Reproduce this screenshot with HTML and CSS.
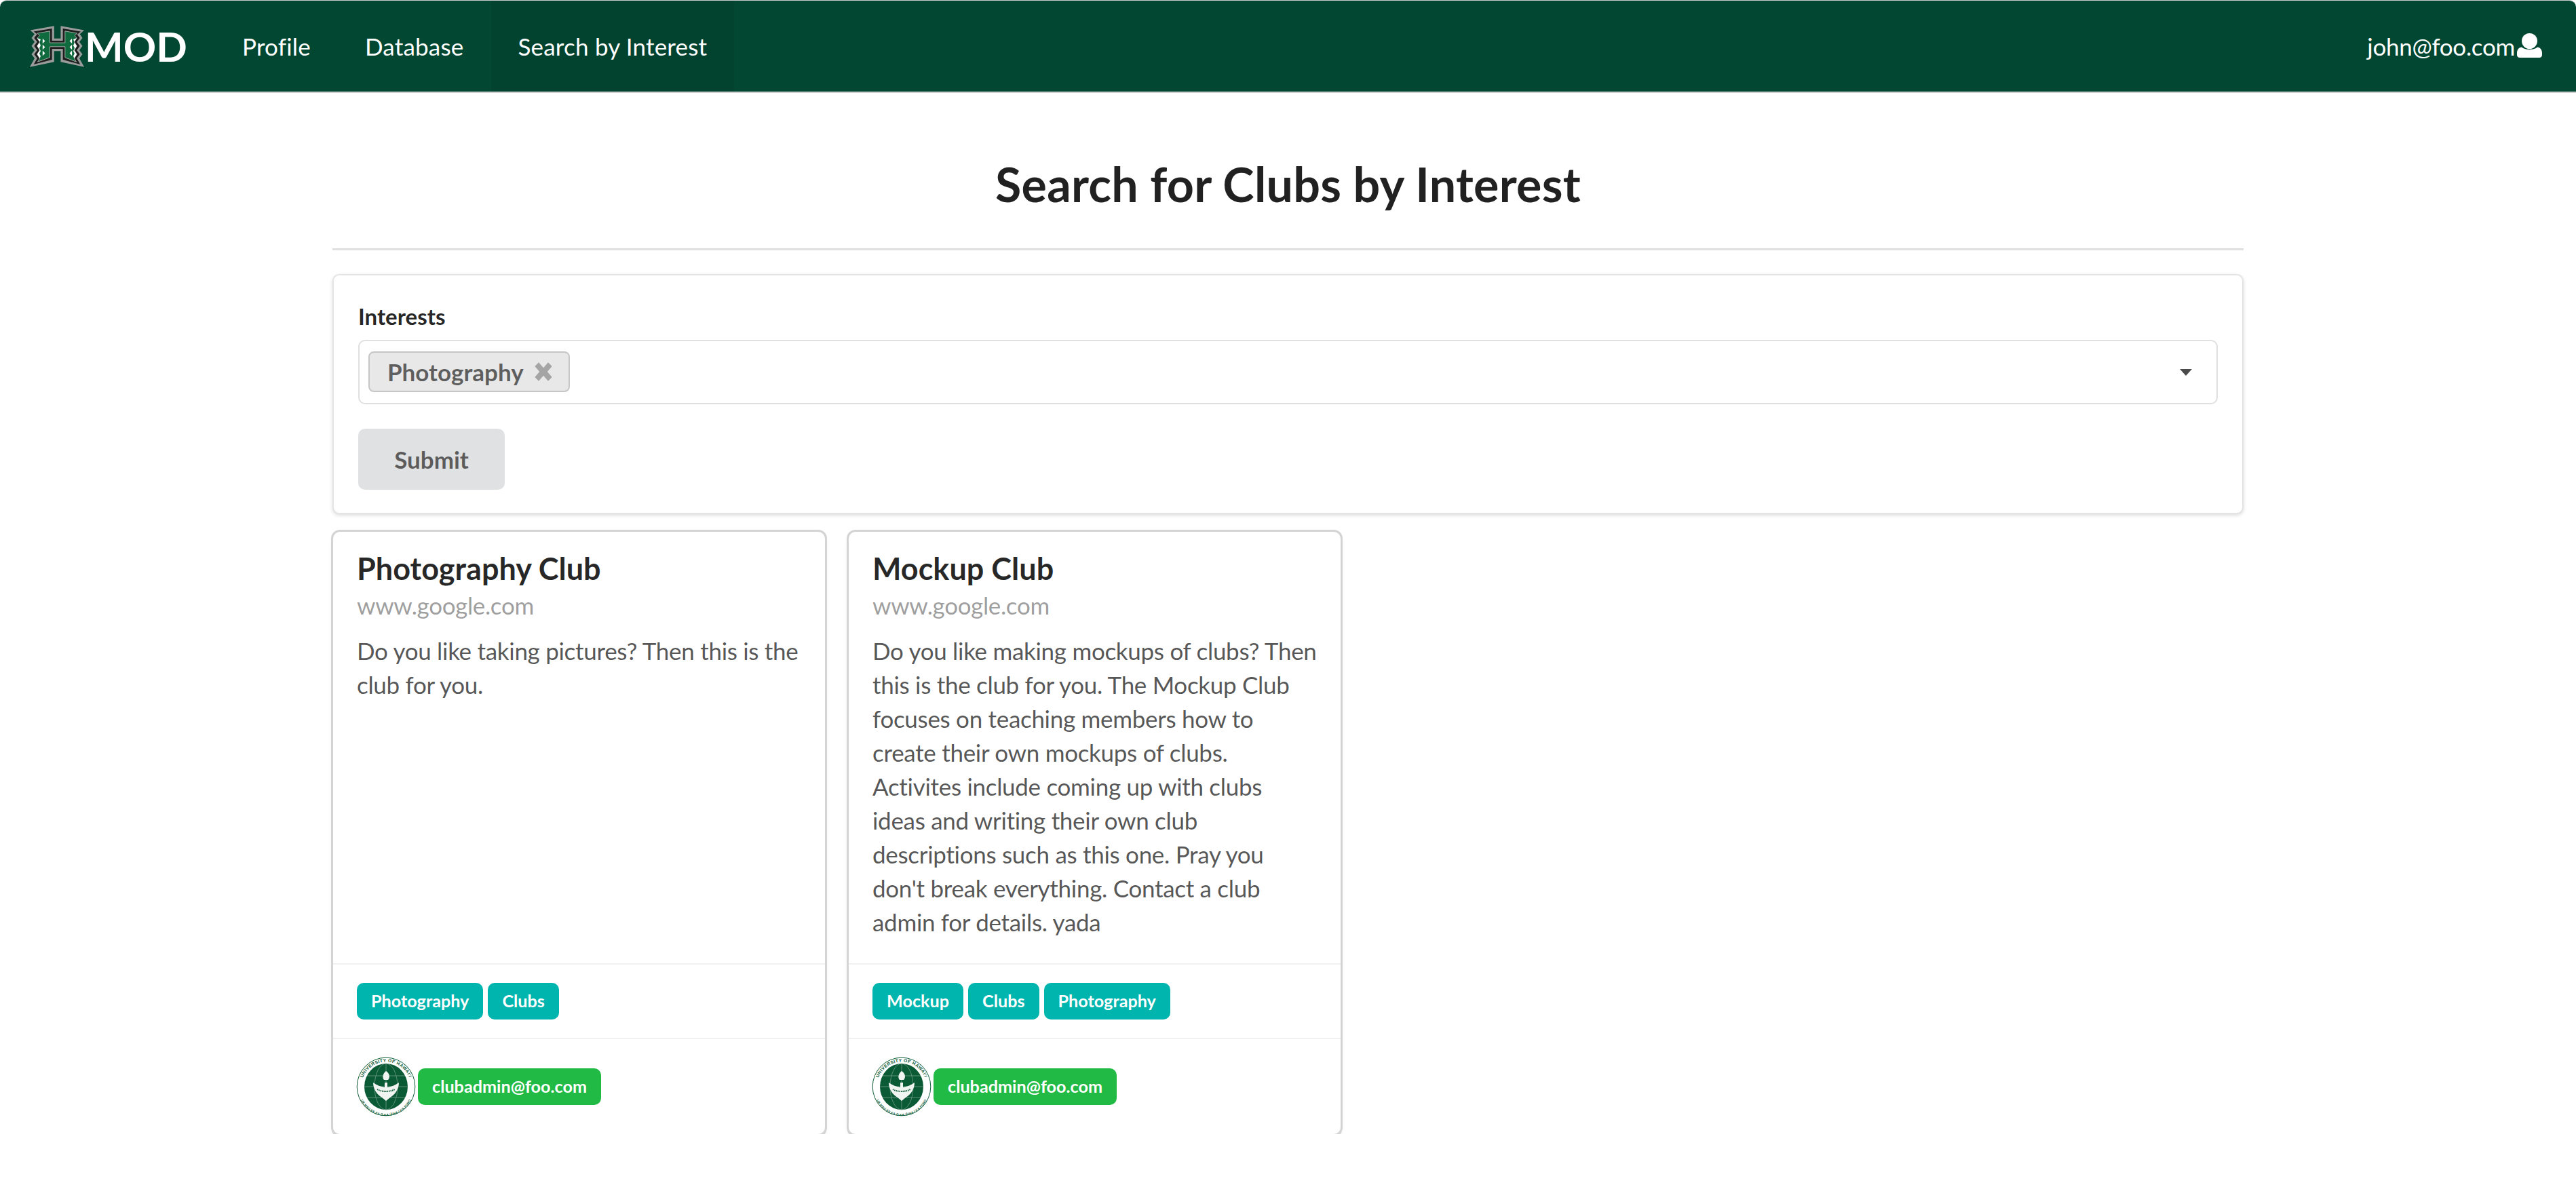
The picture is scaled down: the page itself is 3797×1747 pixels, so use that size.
FILE: index.html
```html
<!DOCTYPE html>
<html lang="en">
<head>
<meta charset="utf-8">
<title>Search by Interest</title>
<link rel="stylesheet" href="styles.css">
</head>
<body>
<nav class="topbar">
  <a class="nav-item brand">
    <svg class="logo" viewBox="60 40 262 210" preserveAspectRatio="none" aria-hidden="true">
      <path class="h-outer" d="M68 70 L178 50 V108 H208 V50 L316 70 L296 88 L308 106 L294 124 L308 143 L294 162 L308 181 L294 200 L316 240 L208 216 V166 H178 V216 L66 240 L88 200 L74 181 L88 162 L74 143 L88 124 L74 106 L88 88 Z"/>
      <path class="h-black" d="M84 76 L168 62 V118 H218 V62 L300 76 L284 90 L296 106 L282 124 L296 143 L282 162 L296 181 L282 200 L298 228 L218 206 V156 H168 V206 L84 228 L100 200 L86 181 L100 162 L86 143 L100 124 L86 106 L100 88 Z"/>
      <path class="h-green" d="M100 84 L158 74 V128 H228 V74 L284 84 L272 94 L282 106 L270 124 L282 143 L270 162 L282 181 L270 200 L280 216 L228 196 V146 H158 V196 L102 216 L112 200 L100 181 L112 162 L100 143 L112 124 L100 106 L112 94 Z"/>
      <path class="h-white" d="M100 106 L112 124 L100 143 L112 162 L100 181 L112 200 L116 190 L110 178 L116 166 L110 152 L116 140 L110 126 L116 112 Z M125 108 L136 120 L125 132 Z M125 136 L136 148 L125 160 Z M125 164 L136 176 L125 188 Z M260 108 L249 120 L260 132 Z M260 136 L249 148 L260 160 Z M260 164 L249 176 L260 188 Z M282 106 L270 124 L282 143 L270 162 L282 181 L270 200 L266 190 L272 178 L266 166 L272 152 L266 140 L272 126 L266 112 Z"/>
    </svg>
    <span class="brand-name">MOD</span>
  </a>
  <a class="nav-item">Profile</a>
  <a class="nav-item">Database</a>
  <a class="nav-item active">Search by Interest</a>
  <a class="nav-item user">john@foo.com
    <svg class="user-icon" viewBox="0 0 37 36" aria-hidden="true">
      <circle cx="18.5" cy="11.5" r="11.5"/>
      <path d="M7 20.5 C11 25 26 25 30 20.5 C34 21 37 24 37 29 V32 C37 34.5 35 36 33 36 H4 C2 36 0 34.5 0 32 V29 C0 24 3 21 7 20.5 Z"/>
    </svg>
  </a>
</nav>

<main class="container">
  <h1 class="page-title">Search for Clubs by Interest</h1>
  <hr class="divider">
  <form class="segment">
    <label class="field-label">Interests</label>
    <div class="dropdown">
      <span class="chip">Photography
        <svg class="chip-x" viewBox="0 0 24 26" aria-hidden="true"><path d="M1 6 L6 1 L12 8 L18 1 L23 6 L17 13 L23 20 L18 25 L12 18 L6 25 L1 20 L7 13 Z"/></svg>
      </span>
      <svg class="caret" viewBox="0 0 18 10" aria-hidden="true"><path d="M0 0 H18 L9 10 Z"/></svg>
    </div>
    <button class="submit" type="button">Submit</button>
  </form>

  <section class="cards">
    <article class="card">
      <div class="card-body">
        <h2 class="card-title">Photography Club</h2>
        <div class="card-meta">www.google.com</div>
        <p class="card-desc">Do you like taking pictures? Then this is the club for you.</p>
      </div>
      <div class="card-extra tags">
        <span class="tag teal">Photography</span><span class="tag teal">Clubs</span>
      </div>
      <div class="card-extra owner">
        <svg class="seal" viewBox="0 0 88 88" role="img" aria-label="University of Hawaii seal">
          <defs>
            <path id="seal-top" d="M7.5 44 A36.5 36.5 0 0 1 80.5 44"/>
            <path id="seal-bottom" d="M3 46 A41 41 0 0 0 85 46"/>
          </defs>
          <circle class="seal-rim" cx="44" cy="44" r="42.8"/>
          <ellipse class="seal-core" cx="44" cy="44" rx="32" ry="34"/>
          <g class="seal-lines">
            <ellipse cx="44" cy="44" rx="17" ry="34"/>
            <path d="M12 44 H76 M16 28 H72 M16 60 H72 M44 10 V78"/>
          </g>
          <path class="seal-white" d="M25 38 C31 42 36 44 42 45 V38 H46 V45 C52 44 57 42 63 38 C63 48 57 56 50 60 L44 65 L38 60 C31 56 25 48 25 38 Z"/>
          <path class="seal-white" d="M44 21 C50 25 50 31 47 34 H41 C38 31 39 25 44 21 Z"/>
          <path class="seal-mark" d="M31 48 C38 52 50 52 57 48"/>
          <text class="seal-text"><textPath href="#seal-top" startOffset="50%" text-anchor="middle">UNIVERSITY OF HAWAI'I</textPath></text>
          <text class="seal-text small"><textPath href="#seal-bottom" startOffset="50%" text-anchor="middle">UA MAU KE EA O KA 'ĀINA I KA PONO</textPath></text>
        </svg>
        <span class="tag green">clubadmin@foo.com</span>
      </div>
    </article>

    <article class="card">
      <div class="card-body">
        <h2 class="card-title">Mockup Club</h2>
        <div class="card-meta">www.google.com</div>
        <p class="card-desc">Do you like making mockups of clubs? Then this is the club for you. The Mockup Club focuses on teaching members how to create their own mockups of clubs. Activites include coming up with clubs ideas and writing their own club descriptions such as this one. Pray you don't break everything. Contact a club admin for details. yada</p>
      </div>
      <div class="card-extra tags">
        <span class="tag teal">Mockup</span><span class="tag teal">Clubs</span><span class="tag teal">Photography</span>
      </div>
      <div class="card-extra owner">
        <svg class="seal" viewBox="0 0 88 88" role="img" aria-label="University of Hawaii seal">
          <circle class="seal-rim" cx="44" cy="44" r="42.8"/>
          <ellipse class="seal-core" cx="44" cy="44" rx="32" ry="34"/>
          <g class="seal-lines">
            <ellipse cx="44" cy="44" rx="17" ry="34"/>
            <path d="M12 44 H76 M16 28 H72 M16 60 H72 M44 10 V78"/>
          </g>
          <path class="seal-white" d="M25 38 C31 42 36 44 42 45 V38 H46 V45 C52 44 57 42 63 38 C63 48 57 56 50 60 L44 65 L38 60 C31 56 25 48 25 38 Z"/>
          <path class="seal-white" d="M44 21 C50 25 50 31 47 34 H41 C38 31 39 25 44 21 Z"/>
          <path class="seal-mark" d="M31 48 C38 52 50 52 57 48"/>
          <text class="seal-text"><textPath href="#seal-top" startOffset="50%" text-anchor="middle">UNIVERSITY OF HAWAI'I</textPath></text>
          <text class="seal-text small"><textPath href="#seal-bottom" startOffset="50%" text-anchor="middle">UA MAU KE EA O KA 'ĀINA I KA PONO</textPath></text>
        </svg>
        <span class="tag green">clubadmin@foo.com</span>
      </div>
    </article>
  </section>
</main>
</body>
</html>
```

FILE: styles.css
```css
* { box-sizing: border-box; }

html, body { margin: 0; padding: 0; background: #fff; }

body {
  font-family: Lato, "Liberation Sans", sans-serif;
  font-size: 35px;
  line-height: 50px;
  color: rgba(0, 0, 0, .87);
}

/* top bar */
.topbar {
  display: flex;
  align-items: stretch;
  height: 137px;
  background: #024731;
  border-top: 1px solid #c9cdcb;
  border-bottom: 2px solid #d0d0d0;
  border-radius: 10px 10px 0 0;
  color: #fff;
}
.nav-item {
  display: flex;
  align-items: center;
  padding: 0 40px;
  font-size: 35px;
  letter-spacing: .2px;
}
.nav-item.active { background: #024330; }
.brand { width: 317px; padding: 0 0 0 42px; letter-spacing: 0; }
.logo { width: 84px; height: 67px; display: block; flex: none; }
.brand-name { font-size: 60px; font-weight: 700; line-height: 1; margin-left: -1px; }
.user { margin-left: auto; padding-right: 50px; gap: 3px; letter-spacing: -.3px; }
.user-icon { width: 37px; height: 36px; fill: #fff; margin-top: -2px; }

/* logo */
.h-outer { fill: #9a9c9b; }
.h-black { fill: #1d1d1d; }
.h-green { fill: #0f6b3e; stroke: #a9acab; stroke-width: 3; }
.h-white { fill: #fff; }

/* page */
.container { width: 2817px; margin: 0 auto; }
.page-title {
  margin: 0;
  padding-top: 90px;
  font-size: 70px;
  line-height: 88px;
  font-weight: 700;
  letter-spacing: .26px;
  text-align: center;
  color: rgba(0, 0, 0, .87);
}
.divider {
  margin: 51px 0 35px;
  height: 3px;
  border: 0;
  background: #e0e0e0;
}

/* form */
.segment {
  display: block;
  height: 354px;
  padding: 37px 36px 0;
  background: #fff;
  border: 2px solid #e3e4e4;
  border-radius: 10px;
  box-shadow: 0 2px 5px rgba(34, 36, 38, .15);
}
.field-label {
  display: block;
  height: 58px;
  font-size: 33px;
  line-height: 46px;
  font-weight: 700;
  color: rgba(0, 0, 0, .87);
}
.dropdown {
  display: flex;
  align-items: center;
  justify-content: space-between;
  height: 95px;
  padding: 0 36px 0 13px;
  border: 2px solid #e0e0e0;
  border-radius: 10px;
}
.chip {
  display: inline-flex;
  align-items: center;
  height: 60px;
  padding: 0 23px 0 26px;
  gap: 15px;
  background: #e8e8e8;
  border: 2px solid #c6c6c6;
  border-radius: 8px;
  font-weight: 700;
  color: rgba(0, 0, 0, .6);
  margin-top: -2px;
}
.chip-x { width: 28px; height: 30px; fill: #a5a5a5; }
.caret { width: 18px; height: 10px; fill: #4b4b4b; }
.submit {
  display: block;
  width: 216px;
  height: 90px;
  margin-top: 36px;
  padding: 0;
  background: #e0e1e2;
  border: 0;
  border-radius: 10px;
  font: 700 35px Lato, "Liberation Sans", sans-serif;
  color: rgba(0, 0, 0, .6);
}

/* cards */
.cards {
  display: flex;
  gap: 35px;
  margin-top: 26px;
  padding-left: 1px;
}
.card {
  display: flex;
  flex-direction: column;
  width: 725px;
  height: 888px;
  background: #fff;
  border-radius: 10px;
  box-shadow: 0 0 0 3px #d4d4d5, 0 3px 0 2px #d4d4d5, 0 5px 8px rgba(34, 36, 38, .08);
}
.card-body { flex: 1; padding: 25px 35px 0; }
.card-title {
  margin: 0;
  font-size: 45px;
  line-height: 58px;
  font-weight: 700;
  color: rgba(0, 0, 0, .85);
}
.card-meta {
  margin-top: 0;
  line-height: 50px;
  letter-spacing: -.35px;
  color: rgba(0, 0, 0, .4);
}
.card-desc {
  margin: 17px 0 0;
  line-height: 50px;
  letter-spacing: -.3px;
  color: rgba(0, 0, 0, .68);
}
.card-extra {
  display: flex;
  align-items: center;
  padding: 0 35px;
  border-top: 2px solid #f1f1f1;
}
.tags { height: 110px; gap: 7px; }
.owner { height: 142px; gap: 3px; padding-left: 34px; }

.tag {
  display: inline-flex;
  align-items: center;
  height: 54px;
  padding: 0 21px;
  border-radius: 10px;
  font-size: 25.2px;
  line-height: 1;
  font-weight: 700;
  color: #fff;
}
.teal { background: #00b5ad; }
.green { background: #21ba45; }

/* seal */
.seal { width: 88px; height: 88px; flex: none; }
.seal-rim { fill: #fff; stroke: #0b5a36; stroke-width: 1; }
.seal-core { fill: #0b5a36; }
.seal-lines { fill: none; stroke: #6f9d85; stroke-width: .8; }
.seal-white { fill: #f1f5f2; }
.seal-mark { fill: none; stroke: #0b5a36; stroke-width: 2; stroke-dasharray: 1.5 1; }
.seal-text {
  font: 700 6.6px "Liberation Sans", sans-serif;
  letter-spacing: .5px;
  fill: #0b5a36;
}
.seal-text.small { font-size: 4.6px; letter-spacing: .2px; }
```
